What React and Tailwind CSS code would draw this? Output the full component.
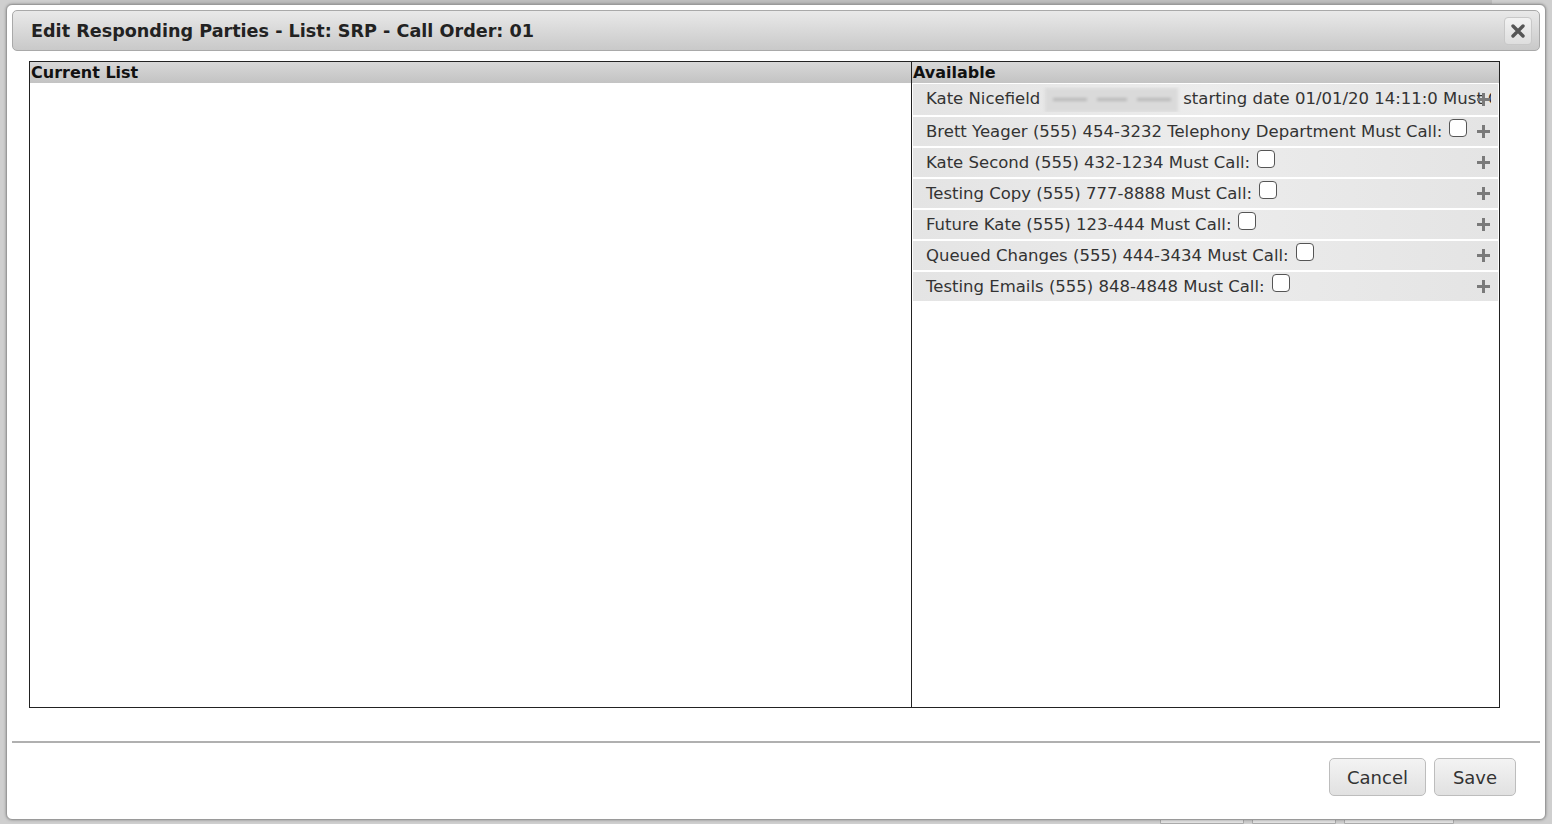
import React from "react";

const available = [
  { name: "Brett Yeager", phone: "(555) 454-3232", extra: "Telephony Department" },
  { name: "Kate Second", phone: "(555) 432-1234" },
  { name: "Testing Copy", phone: "(555) 777-8888" },
  { name: "Future Kate", phone: "(555) 123-444" },
  { name: "Queued Changes", phone: "(555) 444-3434" },
  { name: "Testing Emails", phone: "(555) 848-4848" },
];

function Plus() {
  return (
    <svg width="13" height="13" viewBox="0 0 13 13" className="shrink-0">
      <path d="M5 0h3v5h5v3H8v5H5V8H0V5h5z" fill="#7a7a7a" />
    </svg>
  );
}

function Check() {
  return (
    <span className="inline-block w-[18px] h-[18px] rounded-[4px] border border-[#555] bg-white align-[0px] ml-[7px]"></span>
  );
}

function Row({ children, tall }) {
  return (
    <div
      className={`flex items-center justify-between pl-[13px] pr-[8px] bg-gradient-to-r from-[#e4e4e4] via-[#ececec] to-[#e4e4e4] border-b-2 border-white ${
        tall ? "h-[33px]" : "h-[31px]"
      }`}
    >
      {children}
    </div>
  );
}

export default function App() {
  return (
    <div className="relative w-[1552px] h-[824px] overflow-hidden bg-[#cfcfcf] font-['DejaVu_Sans',sans-serif] text-[#333]">
      {/* page behind the dialog */}
      <div className="h-[14px] mx-[60px] bg-[#bdbdbd] border-b border-[#999]"></div>
      <div className="absolute left-[1160px] bottom-0 flex gap-[8px]">
        <div className="w-[84px] h-[16px] bg-[#e3e3e3] border border-[#aaa] rounded-t-[3px]"></div>
        <div className="w-[84px] h-[16px] bg-[#e3e3e3] border border-[#aaa] rounded-t-[3px]"></div>
        <div className="w-[110px] h-[16px] bg-[#e3e3e3] border border-[#aaa] rounded-t-[3px]"></div>
      </div>

      {/* dialog */}
      <div className="absolute left-[6px] top-[4px] w-[1540px] h-[816px] bg-white border border-[#9a9a9a] rounded-[6px] p-[5px] flex flex-col shadow-[0_0_3px_rgba(0,0,0,0.35)]">
        <div className="h-[41px] shrink-0 flex items-center justify-between pl-[18px] pr-[7px] pt-[2px] rounded-[5px] border border-[#a9a9a9] bg-gradient-to-b from-[#e9e9e9] to-[#c9c9c9]">
          <h1 className="text-[17.6px] font-bold text-[#222]">
            Edit Responding Parties - List: SRP - Call Order: 01
          </h1>
          <button className="w-[28px] h-[28px] -mt-[2px] rounded-[4px] border border-[#c8c8c8] bg-gradient-to-b from-[#f2f2f2] to-[#dedede] flex items-center justify-center">
            <svg width="14" height="14" viewBox="0 0 14 14">
              <path d="M2 2l10 10M12 2L2 12" stroke="#555" strokeWidth="3.4" strokeLinecap="round" />
            </svg>
          </button>
        </div>

        <div className="flex-1 pl-[17px] pt-[10px]">
          <div className="flex w-[1471px] h-[647px] border border-[#222]">
            <div className="w-[882px] border-r border-[#222] flex flex-col">
              <div className="h-[21px] shrink-0 bg-gradient-to-b from-[#d8d8d8] to-[#c3c3c3] px-[1px] text-[16px] font-bold text-[#111] leading-[21px]">
                Current List
              </div>
            </div>
            <div className="flex-1 flex flex-col min-w-0">
              <div className="h-[21px] shrink-0 bg-gradient-to-b from-[#d8d8d8] to-[#c3c3c3] px-[1px] text-[16px] font-bold text-[#111] leading-[21px]">
                Available
              </div>
              <div className="px-[1px] pt-[1px] text-[16.5px] text-[#333]">
                <Row tall>
                  <div className="whitespace-nowrap overflow-hidden min-w-0 flex items-center">
                    <span>Kate Nicefield</span>
                    {/* masked phone number */}
                    <span className="shrink-0 w-[133px] h-[24px] mx-[5px] bg-[#dadada] flex items-center justify-center gap-[10px] blur-[1.5px]">
                      <span className="w-[34px] h-[3px] bg-[#b8b8b8]"></span>
                      <span className="w-[30px] h-[3px] bg-[#b8b8b8]"></span>
                      <span className="w-[34px] h-[3px] bg-[#b8b8b8]"></span>
                    </span>
                    <span>starting date 01/01/20 14:11:0 Must Call:</span>
                  </div>
                  <span className="-ml-[14px]">
                    <Plus />
                  </span>
                </Row>
                {available.map((p) => (
                  <Row key={p.name}>
                    <div className="whitespace-nowrap">
                      {p.name} {p.phone}
                      {p.extra ? ` ${p.extra}` : ""} Must Call:
                      <Check />
                    </div>
                    <Plus />
                  </Row>
                ))}
              </div>
            </div>
          </div>
        </div>

        <div className="h-[2px] bg-[#b0b0b0] shrink-0"></div>
        <div className="h-[71px] shrink-0 flex items-start justify-end gap-[8px] pr-[24px] pt-[15px]">
          <button className="w-[97px] h-[38px] rounded-[5px] border border-[#bdbdbd] bg-gradient-to-b from-[#f3f3f3] to-[#e1e1e1] text-[18px] text-[#333]">
            Cancel
          </button>
          <button className="w-[82px] h-[38px] rounded-[5px] border border-[#bdbdbd] bg-gradient-to-b from-[#f3f3f3] to-[#e1e1e1] text-[18px] text-[#333]">
            Save
          </button>
        </div>
      </div>
    </div>
  );
}
